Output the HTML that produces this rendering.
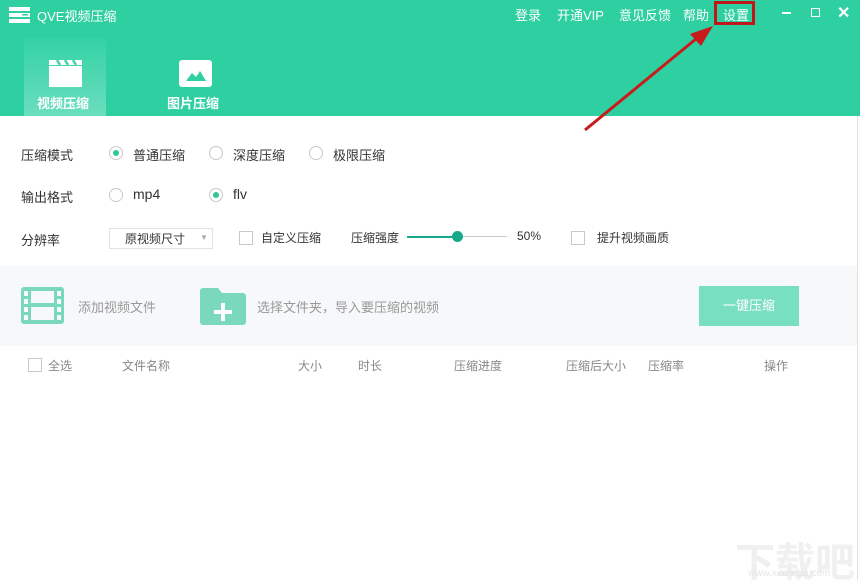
<!DOCTYPE html>
<html><head><meta charset="utf-8"><style>
*{margin:0;padding:0;box-sizing:border-box}
body{width:860px;height:580px;overflow:hidden;background:#fff;font-family:"Liberation Sans","Noto Sans CJK SC",sans-serif;position:relative;color:#333}
.a{position:absolute;white-space:nowrap}
.hdr{position:absolute;left:0;top:0;width:860px;height:116px;background:#2ecfa0}
.t{color:#fff;font-size:13px}
.tab{position:absolute;left:24px;top:38px;width:82px;height:78px;background:linear-gradient(#34d2a5,#6bdebe)}
.lbl{font-size:13px;color:#333}
.rad{position:absolute;width:14px;height:14px;border:1px solid #c8c8c8;border-radius:50%;background:#fff}
.rad.on::after{content:"";position:absolute;left:3px;top:3px;width:6px;height:6px;border-radius:50%;background:#2ec79a}
.cb{position:absolute;width:14px;height:14px;border:1px solid #c8c8c8;background:#fff}
.g{color:#888;font-size:12px}
</style></head><body>
<div class="hdr"></div>
<div class="tab"></div>
<svg class="a" style="left:9px;top:6px" width="22" height="18"><rect x="0" y="1" width="21" height="4" fill="#fff"/><rect x="0" y="7" width="21" height="4" fill="#fff"/><rect x="0" y="13" width="21" height="4" fill="#fff"/><rect x="13" y="8" width="6" height="1.5" fill="#2ecfa0"/></svg>
<div class="a t" style="left:37px;top:6px">QVE视频压缩</div>
<div class="a t" style="left:515px;top:5px">登录</div>
<div class="a t" style="left:557px;top:5px">开通VIP</div>
<div class="a t" style="left:619px;top:5px">意见反馈</div>
<div class="a t" style="left:683px;top:5px">帮助</div>
<div class="a t" style="left:723px;top:5px">设置</div>
<div class="a" style="left:714px;top:1px;width:41px;height:24px;border:3px solid #c01818"></div>
<div class="a" style="left:782px;top:12px;width:9px;height:2px;background:#fff"></div>
<div class="a" style="left:811px;top:8px;width:9px;height:9px;border:1.5px solid #fff"></div>
<div class="a t" style="left:837px;top:3px;font-size:16px;font-weight:bold">✕</div>
<svg class="a" style="left:49px;top:60px" width="33" height="27"><path d="M0 6 L33 6 L33 27 L0 27Z M0 0 H33 V5 H0Z" fill="#fff"/><path d="M8 0 L11 5 M16 0 L19 5 M24 0 L27 5" stroke="#3dd4a8" stroke-width="2.5"/></svg>
<div class="a" style="left:37px;top:93px;color:#fff;font-size:13px;font-weight:bold">视频压缩</div>
<svg class="a" style="left:179px;top:60px" width="33" height="27"><rect width="33" height="27" rx="3" fill="#fff"/><path d="M7 21 L13 13 L17 17 L21 11 L27 21Z" fill="#2ecfa0"/></svg>
<div class="a" style="left:167px;top:93px;color:#fff;font-size:13px;font-weight:bold">图片压缩</div>
<svg class="a" style="left:580px;top:20px" width="140" height="115"><path d="M5 110 L122 14" stroke="#c81c1c" stroke-width="3"/><path d="M133 6 L110 14 L121 26Z" fill="#c81c1c"/></svg>
<div class="a lbl" style="left:21px;top:145px">压缩模式</div>
<div class="rad on" style="left:109px;top:146px"></div><div class="a lbl" style="left:133px;top:145px">普通压缩</div>
<div class="rad" style="left:209px;top:146px"></div><div class="a lbl" style="left:233px;top:145px">深度压缩</div>
<div class="rad" style="left:309px;top:146px"></div><div class="a lbl" style="left:333px;top:145px">极限压缩</div>
<div class="a lbl" style="left:21px;top:187px">输出格式</div>
<div class="rad" style="left:109px;top:188px"></div><div class="a lbl" style="left:133px;top:186px;font-size:14px">mp4</div>
<div class="rad on" style="left:209px;top:188px"></div><div class="a lbl" style="left:233px;top:186px;font-size:14px">flv</div>
<div class="a lbl" style="left:21px;top:230px">分辨率</div>
<div class="a" style="left:109px;top:228px;width:104px;height:21px;border:1px solid #e2e2e2"></div>
<div class="a lbl" style="left:125px;top:230px;font-size:12px">原视频尺寸</div>
<div class="a" style="left:200px;top:233px;font-size:8px;color:#aaa">▼</div>
<div class="cb" style="left:239px;top:231px"></div><div class="a lbl" style="left:261px;top:229px;font-size:12px">自定义压缩</div>
<div class="a lbl" style="left:351px;top:229px;font-size:12px">压缩强度</div>
<div class="a" style="left:407px;top:236px;width:50px;height:2px;background:#18a98a"></div>
<div class="a" style="left:457px;top:236px;width:50px;height:1px;background:#ccc"></div>
<div class="a" style="left:452px;top:231px;width:11px;height:11px;border-radius:50%;background:#18a98a"></div>
<div class="a lbl" style="left:517px;top:229px;font-size:12px">50%</div>
<div class="cb" style="left:571px;top:231px"></div><div class="a lbl" style="left:597px;top:229px;font-size:12px">提升视频画质</div>
<div class="a" style="left:0;top:266px;width:857px;height:80px;background:#f6f8fa"></div>
<svg class="a" style="left:21px;top:287px" width="43" height="37"><rect width="43" height="37" rx="3" fill="#7ad9bd"/><rect x="10" y="4" width="23" height="12" fill="#f6f8fa"/><rect x="10" y="20" width="23" height="13" fill="#f6f8fa"/><g fill="#f6f8fa"><rect x="3" y="4" width="4" height="5"/><rect x="3" y="12" width="4" height="5"/><rect x="3" y="20" width="4" height="5"/><rect x="3" y="28" width="4" height="5"/><rect x="36" y="4" width="4" height="5"/><rect x="36" y="12" width="4" height="5"/><rect x="36" y="20" width="4" height="5"/><rect x="36" y="28" width="4" height="5"/></g></svg>
<div class="a" style="left:78px;top:297px;color:#999;font-size:13px">添加视频文件</div>
<svg class="a" style="left:200px;top:288px" width="46" height="37"><path d="M3 0 H18 L22 5 H43 a3 3 0 0 1 3 3 V34 a3 3 0 0 1 -3 3 H3 a3 3 0 0 1 -3 -3 V3 a3 3 0 0 1 3 -3Z" fill="#7ad9bd"/><path d="M23 15 V33 M14 24 H32" stroke="#fff" stroke-width="4"/></svg>
<div class="a" style="left:257px;top:297px;color:#999;font-size:13px">选择文件夹，导入要压缩的视频</div>
<div class="a" style="left:699px;top:286px;width:100px;height:40px;background:#78dfc0;color:#fff;font-size:13px;text-align:center;line-height:40px">一键压缩</div>
<div class="cb" style="left:28px;top:358px"></div>
<div class="a g" style="left:48px;top:357px">全选</div>
<div class="a g" style="left:122px;top:357px">文件名称</div>
<div class="a g" style="left:298px;top:357px">大小</div>
<div class="a g" style="left:358px;top:357px">时长</div>
<div class="a g" style="left:454px;top:357px">压缩进度</div>
<div class="a g" style="left:566px;top:357px">压缩后大小</div>
<div class="a g" style="left:648px;top:357px">压缩率</div>
<div class="a g" style="left:764px;top:357px">操作</div>
<div class="a" style="left:857px;top:116px;width:1px;height:464px;background:#e0e0e0"></div>
<div class="a" style="left:735px;top:530px;color:#f0f0f0;font-size:40px;font-weight:bold">下载吧</div>
<div class="a" style="left:748px;top:568px;color:#e6e6e6;font-size:10px">www.xiazaiba.com</div>
</body></html>
